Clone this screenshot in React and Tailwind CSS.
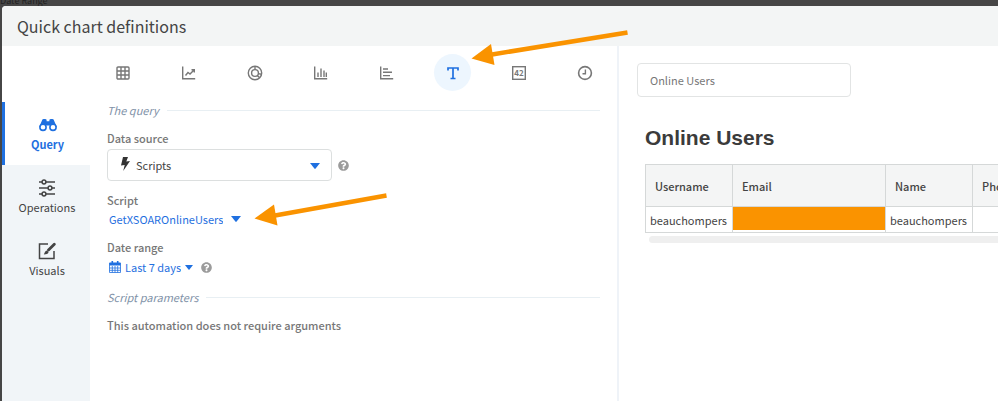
import React from 'react';
import { FaQuestionCircle } from 'react-icons/fa';

const Icon = ({ children, className = 'size-4' }) => (
  <svg viewBox="0 0 16 16" fill="none" stroke="currentColor" strokeWidth="1.4" className={className} aria-hidden="true">
    {children}
  </svg>
);

const CHART_TYPES = [
  {
    name: 'Table',
    icon: (
      <>
        <rect x="2" y="2" width="12" height="12" rx="1" />
        <path d="M2 6h12M2 10h12M6 2v12M10 2v12" />
      </>
    ),
  },
  {
    name: 'Line',
    icon: <path d="M1.7 1.5v12.3h12.5M4.5 10.5l2.5-3 2 1.5 4-4M10.5 4.8h2.8v2.6" />,
  },
  {
    name: 'Pie',
    icon: (
      <>
        <circle cx="8" cy="8" r="6.7" />
        <circle cx="8" cy="8" r="3.4" />
        <path d="M8 1.3v3.3M11.2 8.6l3.3.7M10.3 10.5l2.4 2.3" />
      </>
    ),
  },
  { name: 'Column', icon: <path d="M1.7 1.5v12.3h12.5M5 12V7.5M8 12V3.5M11 12V5.5M13.3 12V7.5" /> },
  { name: 'Bar', icon: <path d="M1.7 1.5v12.3h12.5M4 4h5M4 7.3h9M4 10.6h7" /> },
  { name: 'Text' },
  {
    name: 'Number',
    icon: (
      <>
        <rect x="1.7" y="1.7" width="12.6" height="12.6" />
        <text x="8" y="11.2" textAnchor="middle" fontSize="8" fontWeight="700" fill="currentColor" stroke="none">42</text>
      </>
    ),
  },
  {
    name: 'Duration',
    icon: (
      <>
        <circle cx="8" cy="8" r="6.4" strokeWidth="1.6" />
        <path d="M8.4 4.5v4.2H5.5" />
      </>
    ),
  },
];

const TABS = [
  {
    name: 'Query',
    icon: (
      <svg viewBox="0 0 18 14" className="h-3.5 w-[18px]" fill="currentColor" aria-hidden="true">
        <path d="M3.2 2C3.2.6 7.6.6 7.6 2v1.2h2.8V2c0-1.4 4.4-1.4 4.4 0l3 7H11V7.5H7V9H.2z" />
        <circle cx="4" cy="9.3" r="3.1" fill="#fff" stroke="currentColor" strokeWidth="1.6" />
        <circle cx="14" cy="9.3" r="3.1" fill="#fff" stroke="currentColor" strokeWidth="1.6" />
      </svg>
    ),
  },
  {
    name: 'Operations',
    icon: (
      <svg viewBox="0 0 18 18" className="size-[18px]" fill="none" stroke="currentColor" strokeWidth="1.5" aria-hidden="true">
        <path d="M1 3h3M8 3h9M1 9h9M14 9h3M1 15h3M8 15h9" />
        <circle cx="6" cy="3" r="1.9" />
        <circle cx="12" cy="9" r="1.9" />
        <circle cx="6" cy="15" r="1.9" />
      </svg>
    ),
  },
  {
    name: 'Visuals',
    icon: (
      <svg viewBox="0 0 18 18" className="size-[18px]" fill="none" stroke="currentColor" strokeWidth="1.5" aria-hidden="true">
        <path d="M10 2H1.5v14.5h14.5V9" />
        <path d="M16.3 2.2L10.500 8" strokeWidth="2.800" strokeLinecap="round" />
        <path d="M9 8.500c-2 .2-2 2-3.200 4 2.400 0 4.500-.4 4.800-2.400z" fill="currentColor" stroke="none" />
      </svg>
    ),
  },
];

const Caret = ({ className }) => (
  <svg viewBox="0 0 10 6" fill="currentColor" className={className} aria-hidden="true">
    <path d="M0 0h10L5.600 5.600q-.6.6-1.200 0z" />
  </svg>
);

const Help = ({ label }) => (
  <button type="button" aria-label={label} className="text-[#9b9b9b]">
    <FaQuestionCircle className="size-[11px]" />
  </button>
);

const SectionTitle = ({ children }) => (
  <div className="flex items-center gap-2">
    <h2 className="text-[11px] leading-4 italic text-[#7f92a8]">{children}</h2>
    <div className="h-px flex-1 bg-[#e8eff3]" />
  </div>
);

function QueryForm() {
  return (
    <form className="flex flex-col px-[17px] text-[11px] leading-4">
      <SectionTitle>The query</SectionTitle>

      <label htmlFor="source" className="mt-3 font-medium text-[#777]">Data source</label>
      <div className="mt-[3px] flex items-center gap-1.5">
        <div className="relative w-[225px]">
          <select id="source" className="h-8 w-full appearance-none rounded border border-[#dcdfdf] bg-white pl-7 text-[#444]">
            <option>Scripts</option>
          </select>
          <svg viewBox="0 0 10 14" className="pointer-events-none absolute top-2 left-[13px] h-3.5 w-2.5 fill-[#333]" aria-hidden="true">
            <path d="M3 0h5L6.3 4.5 10 4 3.2 14l1.5-6L1 8.6z" />
          </svg>
          <Caret className="pointer-events-none absolute top-3.5 right-3 h-1.5 w-2.5 text-[#1f70e0]" />
        </div>
        <Help label="About data source" />
      </div>

      <label htmlFor="script" className="mt-[11px] font-medium text-[#777]">Script</label>
      <div className="mt-[3px] flex items-center gap-2 pl-0.5 text-[#1f70e0]">
        <select id="script" className="field-sizing-content h-4 appearance-none bg-transparent">
          <option>GetXSOAROnlineUsers</option>
        </select>
        <Caret className="h-1.5 w-2.5" />
      </div>

      <label htmlFor="range" className="mt-3 font-medium text-[#777]">Date range</label>
      <div className="mt-1 flex items-center text-[#1f70e0]">
        <svg viewBox="0 0 12 12" className="ml-0.5 size-3" fill="none" stroke="currentColor" aria-hidden="true">
          <path d="M.5 2h11v9.5H.5zM.5 7h11M.5 9.3h11M3.3 5v6.5M6 5v6.5M8.7 5v6.5" strokeWidth=".8" />
          <path d="M.5 1.8h11v2.7H.5z" fill="currentColor" stroke="none" />
          <path d="M3.3 0v3M8.7 0v3" strokeWidth="1.6" />
        </svg>
        <select id="range" className="field-sizing-content ml-1 h-4 appearance-none bg-transparent">
          <option>Last 7 days</option>
        </select>
        <Caret className="mr-2 ml-1 h-[5px] w-2" />
        <Help label="About date range" />
      </div>

      <div className="mt-3.5">
        <SectionTitle>Script parameters</SectionTitle>
      </div>
      <p className="mt-3 font-medium text-[#777]">This automation does not require arguments</p>
    </form>
  );
}

function Preview() {
  const cell = 'border border-[#d5d8d8]';
  return (
    <section className="min-w-0 flex-1 overflow-hidden pt-[17px] pl-[18px] text-[11px] leading-4 text-[#444]">
      <input
        aria-label="Widget name"
        defaultValue="Online Users"
        className="block h-[34px] w-[214px] rounded border border-[#e2e4e4] px-3 text-[#777]"
      />
      <div className="pl-2">
        <h2 className="mt-[27px] font-['Liberation_Sans',sans-serif] text-[21px] leading-7 font-bold text-[#3b3b3b]">Online Users</h2>
        <table className="mt-3 w-[480px] table-fixed border-collapse">
          <colgroup>
            <col className="w-[87px]" />
            <col className="w-[153px]" />
            <col className="w-[87px]" />
            <col className="w-[153px]" />
          </colgroup>
          <thead>
            <tr className="h-[42px] bg-[#f4f5f5] text-left">
              {['Username', 'Email', 'Name', 'Phone'].map((h) => (
                <th key={h} className={`${cell} px-[9px] font-medium`}>{h}</th>
              ))}
            </tr>
          </thead>
          <tbody>
            <tr className="h-[26px]">
              <td className={`${cell} pl-1`}>beauchompers</td>
              <td className={`${cell} p-0 align-top`}>
                <div className="h-[23px] bg-[#fa9300]" />
              </td>
              <td className={`${cell} pl-1`}>beauchompers</td>
              <td className={cell} />
            </tr>
          </tbody>
        </table>
        <div className="mt-[3px] ml-1 h-[7px] w-[480px] rounded-full bg-[#efefef]" />
      </div>
    </section>
  );
}

export default function App() {
  return (
    <div className="relative flex min-h-screen flex-col overflow-hidden bg-[#464646] pl-0.5 font-['Noto_Sans_CJK_SC',sans-serif]">
      <div className="-ml-0.5 h-1.5 overflow-hidden">
        <p className="-mt-[5px] text-[9px] leading-3 text-[#222]">Date Range</p>
      </div>
      <div className="flex flex-1 flex-col rounded-tl-sm bg-white">
        <header className="flex h-10 items-center rounded-tl-sm bg-[#f3f5f5] px-[15px]">
          <h1 className="text-base text-[#444]">Quick chart definitions</h1>
        </header>

        <div className="flex flex-1">
          <nav className="flex w-[88px] shrink-0 flex-col bg-[#f1f5f8]">
            <div className="h-14 bg-white" />
            {TABS.map((tab, i) => (
              <button
                key={tab.name}
                type="button"
                className={
                  i === 0
                    ? 'flex h-[63px] flex-col items-center justify-center gap-0.5 border-l-[3px] border-[#1f70e0] bg-white text-[11px] leading-4 font-bold text-[#1f70e0]'
                    : 'flex h-[63px] flex-col items-center justify-center gap-0.5 pl-0.5 text-[11px] leading-4 text-[#444]'
                }
              >
                <span className="flex h-[18px] items-center">{tab.icon}</span>
                {tab.name}
              </button>
            ))}
          </nav>

          <section className="w-[529px] shrink-0 border-r-2 border-[#eff3f8]">
            <div className="flex justify-between px-3.5 pt-2 pb-[11px]">
              {CHART_TYPES.map(({ name, icon }) => (
                <button
                  key={name}
                  type="button"
                  aria-label={name}
                  className={
                    name === 'Text'
                      ? 'flex size-[37px] items-center justify-center rounded-full bg-[#edf6fe] text-[#1f70e0]'
                      : 'flex size-[37px] items-center justify-center text-[#777]'
                  }
                >
                  {icon ? (
                    <Icon>{icon}</Icon>
                  ) : (
                    <Icon>
                      <path d="M3 5.500V3h10v2.500M8 3v10.500M5.500 13.500h5" strokeWidth="1.700" />
                    </Icon>
                  )}
                </button>
              ))}
            </div>
            <QueryForm />
          </section>

          <Preview />
        </div>
      </div>

      {/* callout arrows */}
      <svg className="pointer-events-none absolute top-0 left-0 h-60 w-[640px] fill-[#fa9300] stroke-[#fa9300]" aria-hidden="true">
        <path d="M492 54.500L627.500 32.500" strokeWidth="4.500" />
        <path d="M471.500 58.500L491 44l3.500 21z" stroke="none" />
        <path d="M275 215.500L386.500 195.500" strokeWidth="4.500" />
        <path d="M254.500 218.500L274 204.500l3.500 21z" stroke="none" />
      </svg>
    </div>
  );
}
